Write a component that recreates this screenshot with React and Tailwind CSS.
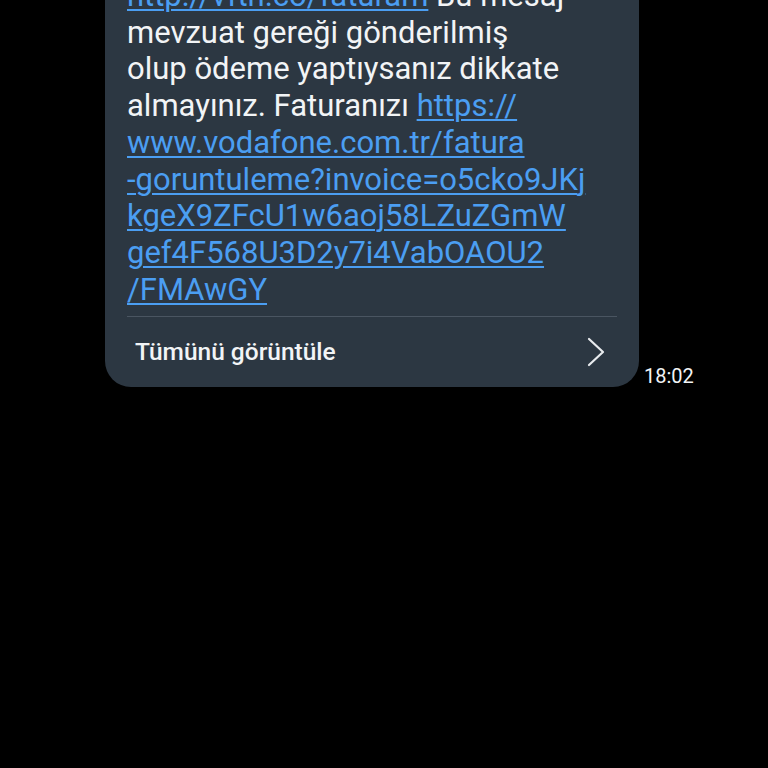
import React from "react";

const lines = [
  [{ t: "http://vfth.co/faturam", l: true }, { t: " Bu mesaj" }],
  [{ t: "mevzuat gereği gönderilmiş" }],
  [{ t: "olup ödeme yaptıysanız dikkate" }],
  [{ t: "almayınız. Faturanızı " }, { t: "https://", l: true }],
  [{ t: "www.vodafone.com.tr/fatura", l: true }],
  [{ t: "-goruntuleme?invoice=o5cko9JKj", l: true }],
  [{ t: "kgeX9ZFcU1w6aoj58LZuZGmW", l: true }],
  [{ t: "gef4F568U3D2y7i4VabOAOU2", l: true }],
  [{ t: "/FMAwGY", l: true }],
];

export default function App() {
  return (
    <div
      className="w-[768px] h-[768px] bg-black overflow-hidden"
      style={{ fontFamily: "Roboto, 'Noto Sans', sans-serif" }}
    >
      <div className="flex items-end mt-[-26px] pl-[105px]">
        <div className="w-[534px] bg-[#2c3742] rounded-b-[26px] flex flex-col">
          <div className="px-[22px] pt-[4px] text-[31px] leading-[36.7px] text-[#f2f4f6]">
            {lines.map((ln, i) => (
              <div key={i} className="whitespace-pre">
                {ln.map((s, j) =>
                  s.l ? (
                    <span key={j} className="text-[#4b9ef2] underline underline-offset-[3px] decoration-[1.5px]">
                      {s.t}
                    </span>
                  ) : (
                    <span key={j}>{s.t}</span>
                  )
                )}
              </div>
            ))}
          </div>
          <div className="mx-[22px] mt-[8px] h-px bg-[#4a5561]" />
          <div className="flex items-center justify-between h-[70px] pl-[30px] pr-[34px]">
            <span className="text-[24.5px] font-medium text-[#f2f4f6]">Tümünü görüntüle</span>
            <svg width="18" height="30" viewBox="0 0 18 30" fill="none">
              <path d="M2 2 L16 15 L2 28" stroke="#e8ebee" strokeWidth="2.2" strokeLinecap="round" strokeLinejoin="round" />
            </svg>
          </div>
        </div>
        <span className="ml-[5px] text-[20px] text-[#f2f4f6] leading-none pb-[1px]">18:02</span>
      </div>
    </div>
  );
}
